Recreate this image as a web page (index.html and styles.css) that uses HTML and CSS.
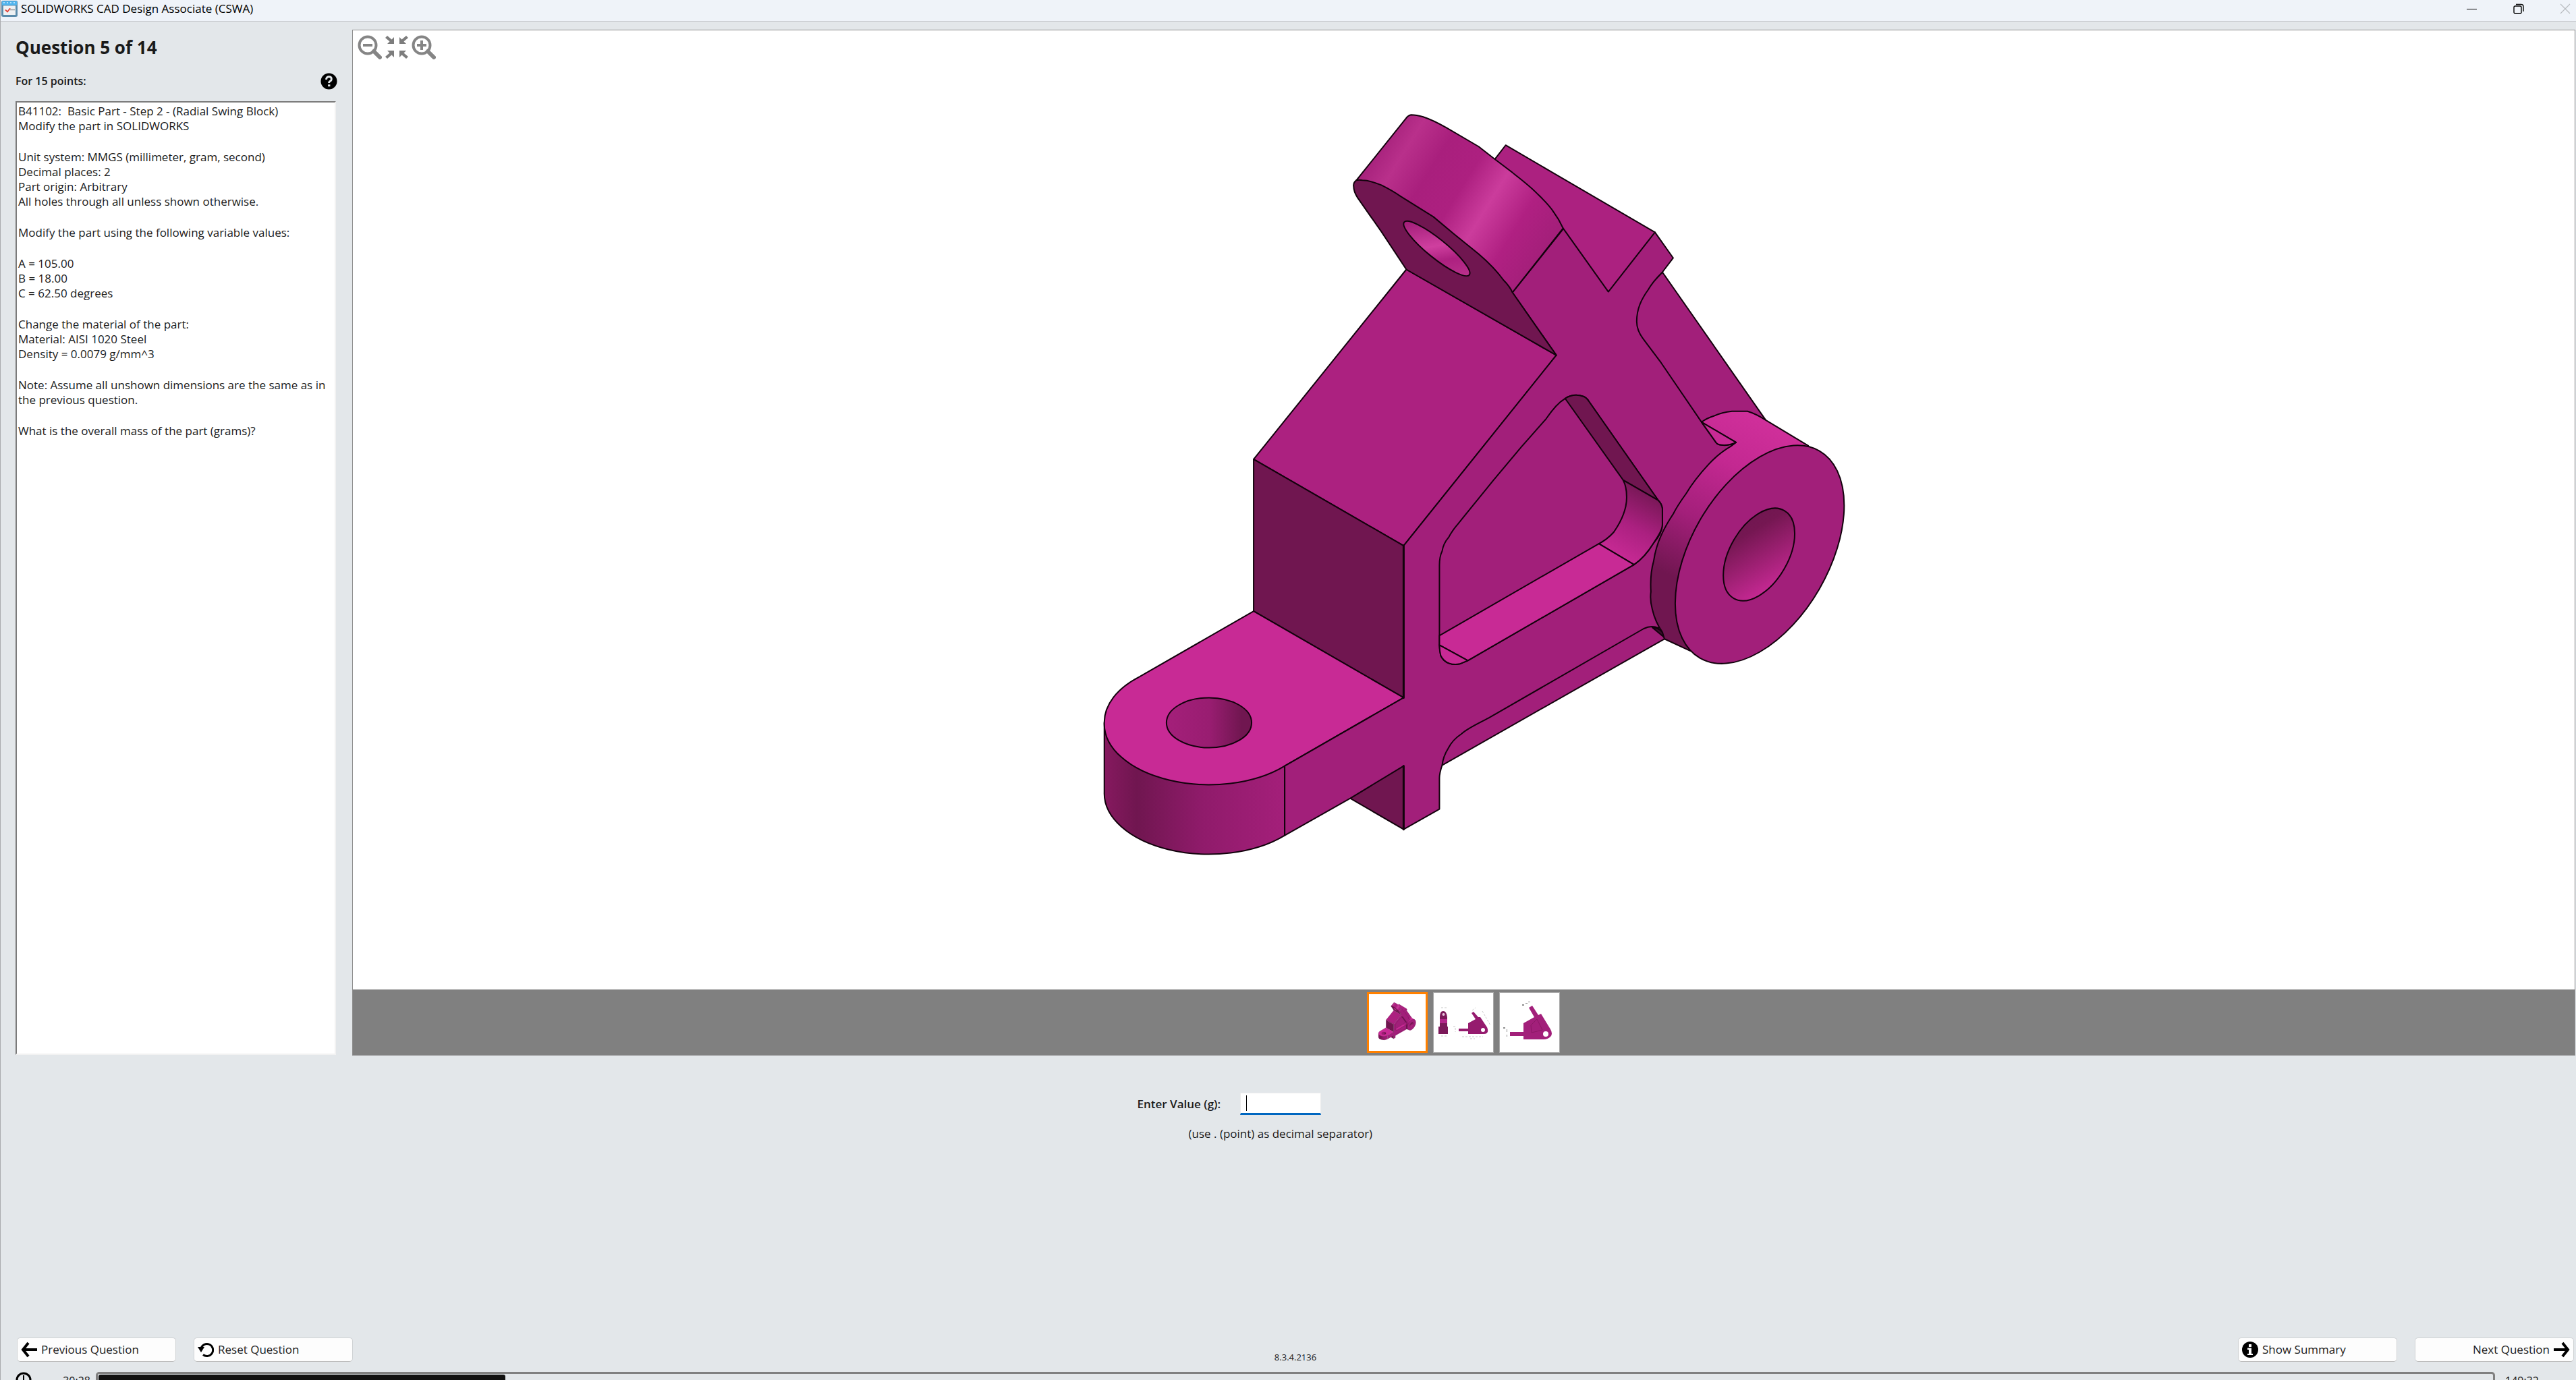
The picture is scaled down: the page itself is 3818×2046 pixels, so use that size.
FILE: index.html
```html
<!DOCTYPE html>
<html lang="en">
<head>
<meta charset="utf-8">
<title>SOLIDWORKS CAD Design Associate (CSWA)</title>
<link rel="stylesheet" href="styles.css">
</head>
<body>
<svg class="defs" width="0" height="0" aria-hidden="true">
  <defs>
    <linearGradient id="g-arm" gradientUnits="userSpaceOnUse" x1="2040" y1="215" x2="2290" y2="370">
      <stop offset="0" stop-color="#a4207a"/><stop offset=".14" stop-color="#b9308b"/><stop offset=".3" stop-color="#a91f7d"/><stop offset=".48" stop-color="#ad2080"/><stop offset=".64" stop-color="#cb3c9c"/><stop offset=".82" stop-color="#b02082"/><stop offset="1" stop-color="#a41f7a"/>
    </linearGradient>
    <linearGradient id="g-armhole" gradientUnits="userSpaceOnUse" x1="2095" y1="340" x2="2165" y2="400">
      <stop offset="0" stop-color="#a41f7a"/><stop offset=".45" stop-color="#cf3f9f"/><stop offset=".7" stop-color="#ad2080"/><stop offset="1" stop-color="#b9308b"/>
    </linearGradient>
    <linearGradient id="g-foot" gradientUnits="userSpaceOnUse" x1="1638" y1="0" x2="1905" y2="0">
      <stop offset="0" stop-color="#86195f"/><stop offset=".18" stop-color="#701650"/><stop offset=".55" stop-color="#901b6b"/><stop offset="1" stop-color="#a41f7a"/>
    </linearGradient>
    <linearGradient id="g-foothole" gradientUnits="userSpaceOnUse" x1="1730" y1="0" x2="1857" y2="0">
      <stop offset="0" stop-color="#a41f7a"/><stop offset=".5" stop-color="#991d71"/><stop offset=".88" stop-color="#701650"/><stop offset="1" stop-color="#701650"/>
    </linearGradient>
    <linearGradient id="g-fillet" gradientUnits="userSpaceOnUse" x1="2450" y1="725" x2="2395" y2="825">
      <stop offset="0" stop-color="#701650"/><stop offset=".55" stop-color="#ab2080"/><stop offset="1" stop-color="#c82a95"/>
    </linearGradient>
    <linearGradient id="g-rim" gradientUnits="userSpaceOnUse" x1="2600" y1="620" x2="2465" y2="900">
      <stop offset="0" stop-color="#cf2f9a"/><stop offset=".25" stop-color="#c32891"/><stop offset=".55" stop-color="#a31f7a"/><stop offset=".85" stop-color="#701650"/><stop offset="1" stop-color="#701650"/>
    </linearGradient>
    <linearGradient id="g-bore" gradientUnits="userSpaceOnUse" x1="2640" y1="770" x2="2575" y2="885">
      <stop offset="0" stop-color="#701650"/><stop offset=".2" stop-color="#751752"/><stop offset=".85" stop-color="#c32891"/><stop offset="1" stop-color="#c82a95"/>
    </linearGradient>
    <symbol id="part" viewBox="1600 46 1140 1420">
      <g stroke="#12020c" stroke-width="2" stroke-linejoin="round" stroke-linecap="round">
        <path fill="#a21f7a" d="M2464 404L2617 623 2567 665 2540 720 2464 900 2400 560 2400 470Z"/>
        <path fill="#a21f7a" d="M2138 1134L2467 947 2480 930 2449 890 2400 900 2130 1080Z"/>
        <path fill="#ac2180" d="M2085 400L1859 681 2081 809 2307 527Z"/>
        <path fill="#701650" d="M1859 681V906L2081 1034V809Z"/>
        <path fill="#701650" d="M2002 1183L2081 1229V1135L2040 1140Z"/>
        <path fill="url(#g-foot)" d="M1638 1071V1174A155 90 0 0 0 1905 1238V1135L1800 1060Z"/>
        <path fill="#c82a95" d="M1859 906L1690 1003A155 90 0 0 0 1638 1071A155 90 0 0 0 1905 1135L2081 1034Z"/>
        <ellipse fill="url(#g-foothole)" cx="1793" cy="1071" rx="63" ry="37"/>
        <path fill="#a21f7a" d="M2307 527L2081 809V1034L1905 1135V1238L2002 1183 2081 1135V1229L2134 1199V1153C2134 1146 2136 1140 2138 1134C2139 1125 2142 1117 2147 1109C2151 1101 2157 1094 2166 1088C2176 1079 2190 1073 2207 1064L2436 932C2444 928 2452 928 2458 931L2480 900 2565 662 2573 656 2565 659Q2558 661 2552 660Q2547 660 2544 657L2522 626 2462 538 2435 502C2429 494 2426 486 2426 477C2426 458 2433 444 2443 430C2448 421 2456 412 2464 404L2480 383 2453 345 2318 339 2242 434Z"/>
        <path fill="#3a0a2a" d="M2449 930Q2458 930 2464 937L2467 945Z"/>
        <path fill="#ac2180" d="M2215 238L2232 216 2453 345 2384 433 2317 339Z"/>
        <path fill="url(#g-arm)" d="M2092 171Q2087 172 2084 177L2011 268 2020 290 2242 434 2317 339C2313 330 2309 323 2303 315C2296 304 2287 296 2277 286C2266 275 2254 266 2240 255L2215 236 2192 218 2144 190C2132 183 2122 178 2110 174Q2100 171 2092 171Z"/>
        <path fill="#701650" d="M2011 268Q2006 272 2007 277C2007 283 2009 288 2013 294L2048 344 2085 400 2307 527 2242 434C2239 427 2235 422 2229 416C2219 402 2206 389 2192 377L2155 347 2125 322 2077 292C2067 285 2058 280 2048 275C2038 271 2029 268 2020 268Q2015 267 2011 268Z"/>
        <ellipse fill="url(#g-armhole)" cx="2130" cy="369" rx="62" ry="14" transform="rotate(39 2130 369)"/>
        <path fill="#a21f7a" d="M2320 591C2310 597 2300 609 2292 621L2255 663 2214 712 2162 776C2156 783 2151 790 2148 796C2142 803 2139 810 2138 817C2135 823 2134 831 2134 838V956C2134 962 2135 967 2136 972C2139 978 2142 981 2148 983Q2156 986 2164 984L2176 979 2422 837C2434 829 2443 818 2451 805C2459 796 2464 787 2464 777V754Q2463 747 2458 742L2355 595Q2352 590 2347 588Q2333 583 2320 591Z"/>
        <path fill="#701650" d="M2320 591L2406 712 2458 742 2355 595Q2352 590 2347 588Q2333 583 2320 591Z"/>
        <path fill="url(#g-fillet)" d="M2406 712Q2411 722 2411 735C2412 753 2403 773 2392 789Q2382 800 2370 806L2422 837C2434 829 2443 818 2451 805C2459 793 2464 785 2464 777V754Q2463 747 2458 742Z"/>
        <path fill="#c82a95" d="M2370 806L2134 942V956L2176 979 2422 837Z"/>
        <path fill="#c82a95" d="M2134 956L2176 979 2164 984Q2156 986 2148 983C2142 981 2139 978 2136 972Q2134 965 2134 956Z"/>
        <path fill="url(#g-rim)" d="M2522 626Q2530 620 2540 617C2549 613 2558 611 2567 610H2590C2600 613 2609 618 2617 623L2680 661 2700 700 2506 965 2467 947 2464 937C2457 927 2452 916 2449 903C2446 892 2446 884 2447 877C2446 860 2447 846 2451 832C2453 818 2457 805 2462 794C2467 783 2472 774 2480 762C2485 752 2491 743 2499 732C2508 717 2519 703 2532 689C2542 678 2553 669 2565 662L2573 656Z"/>
        <path fill="#c82a95" d="M2522 626L2544 657Q2547 660 2552 660 2562 661 2573 656Z"/>
        <ellipse fill="#a21f7a" cx="2608" cy="822" rx="177" ry="102" transform="rotate(-60 2608 822)"/>
        <ellipse fill="url(#g-bore)" cx="2607" cy="822" rx="75" ry="43" transform="rotate(-60 2607 822)"/>
        <path fill="none" stroke-width="3" d="M2081 809V1034M2081 1135V1229"/>
      </g>
    </symbol>
  </defs>
</svg>

<div class="app">
  <header class="titlebar">
    <svg class="app-icon" viewBox="0 0 24 32" preserveAspectRatio="none" aria-hidden="true">
      <rect x="0" y="0" width="24" height="32" rx="3" fill="#5b8bab"/>
      <path d="M1 1h22v8H1z" fill="#4fb4ee"/><path d="M3 4h2M8 4h2M13 4h2M18 4h2" stroke="#d8efff" stroke-width="2"/>
      <rect x="3" y="10" width="18" height="18" fill="#eef1f3"/>
      <path d="M6 18l3 4 4-7" fill="none" stroke="#e23b30" stroke-width="2"/><path d="M13 18h7" stroke="#9a9a9a" stroke-width="2"/>
    </svg>
    <h1 class="title">SOLIDWORKS CAD Design Associate (CSWA)</h1>
    <div class="window-controls">
      <button class="win-btn" aria-label="Minimize"><svg viewBox="0 0 16 16"><path d="M0 8.500h15" stroke="#000"/></svg></button>
      <button class="win-btn" aria-label="Restore"><svg viewBox="0 0 16 16" fill="none" stroke="#000" stroke-width="1.400"><rect x="1" y="4" width="11" height="11" rx="2"/><path d="M4 1.500h7.500q3.500 0 3.500 3.500v7"/></svg></button>
      <button class="win-btn" aria-label="Close" disabled><svg viewBox="0 0 16 16"><path d="M1 1l14 14M15 1L1 15" stroke="#b9bcc1" stroke-width="1.200"/></svg></button>
    </div>
  </header>

  <main class="workspace">
    <aside class="sidebar">
      <h2 class="question-number">Question 5 of 14</h2>
      <div class="points-row">
        <span class="points">For 15 points:</span>
        <button class="help" aria-label="Help"><svg viewBox="0 0 26 26"><circle cx="13" cy="13" r="12.500" fill="#000"/><path d="M9 10.500V9q1-3 4-3 4 0 4 3.500 0 2-2 3.200-2 1.200-2 3" fill="none" stroke="#e3e7ea" stroke-width="3"/><path d="M11.500 18h3.500v3h-3.500z" fill="#e3e7ea"/></svg></button>
      </div>
      <article class="prompt">
        <p>B41102:&nbsp; Basic Part - Step 2 - (Radial Swing Block)<br>Modify the part in SOLIDWORKS</p>
        <p>Unit system: MMGS (millimeter, gram, second)<br>Decimal places: 2<br>Part origin: Arbitrary<br>All holes through all unless shown otherwise.</p>
        <p>Modify the part using the following variable values:</p>
        <p>A = 105.00<br>B = 18.00<br>C = 62.50 degrees</p>
        <p>Change the material of the part:<br>Material: AISI 1020 Steel<br>Density = 0.0079 g/mm^3</p>
        <p>Note: Assume all unshown dimensions are the same as in<br>the previous question.</p>
        <p>What is the overall mass of the part (grams)?</p>
      </article>
    </aside>

    <section class="viewer" aria-label="Part view">
      <div class="canvas">
        <svg class="drawing" role="img" aria-label="Radial Swing Block"><use href="#part"/></svg>
        <div class="zoom-tools">
          <button class="tool" aria-label="Zoom out"><svg viewBox="0 0 36 36" fill="none" stroke="#858585"><circle cx="15" cy="15" r="12.500" stroke-width="4"/><path d="M24 24l9 9" stroke-width="6" stroke-linecap="round"/><path d="M8 15h14" stroke-width="4"/></svg></button>
          <button class="tool" aria-label="Fit"><svg viewBox="0 0 36 36" fill="#7d7d7d"><path d="M14 3v10H4l3.500-3.500L1 4l3-3 6.500 5.500zM22 3v10h10l-3.500-3.500L35 4l-3-3-6.500 5.500zM14 33V23H4l3.500 3.500L1 32l3 3 6.500-5.500zM22 33V23h10l-3.500 3.500L35 32l-3 3-6.500-5.500z"/></svg></button>
          <button class="tool" aria-label="Zoom in"><svg viewBox="0 0 36 36" fill="none" stroke="#858585"><circle cx="15" cy="15" r="12.500" stroke-width="4"/><path d="M24 24l9 9" stroke-width="6" stroke-linecap="round"/><path d="M8 15h14M15 8v14" stroke-width="4"/></svg></button>
        </div>
      </div>
      <div class="thumbs">
        <button class="thumb thumb-active" aria-label="View 1"><svg viewBox="0 0 84 84"><use href="#part" x="12" y="6" width="58" height="72"/></svg></button>
        <button class="thumb" aria-label="View 2"><svg viewBox="0 0 88 88">
          <path d="M9 36q0-9 5-9t6 9v14h1v11H7V50h2z" fill="#7b1859"/><path d="M9 39h11v6H9z" fill="#b3268a"/><circle cx="14.500" cy="32" r="2" fill="#e7c4dc"/>
          <path d="M37 53h14V45l11-6-6-9 3-2 7 8h3l10 15q4 10-5 10H51v-4H37z" fill="#951b6e"/><circle cx="73" cy="55" r="3" fill="#fff"/>
          <g stroke="#c9c9c9" fill="none" stroke-dasharray="3 2"><path d="M11 22h8M11 64h8M29 50h5M32 52v6M42 65h31M57 26l5-4M72 27l12 21M54 68h7"/></g>
        </svg></button>
        <button class="thumb" aria-label="View 3"><svg viewBox="0 0 88 88">
          <path d="M15 58h20V45l16-9-8-14 5-3 9 14 4-2 14 23q4 7 0 11t-10 4H35v-5H15z" fill="#a21f7a"/><path d="M46 48l9-9 8 16-16 4z" fill="none" stroke="#8a1965"/><circle cx="68" cy="61" r="4" fill="#fff"/>
          <g fill="#8f8f8f"><path d="M33 17h3v2h-3zM38 15h3v1h-3zM42 13h3v1h-3zM5 51h3v2H5zM10 54h1v4h-1zM10 62h1v3h-1z"/></g>
        </svg></button>
      </div>
    </section>
  </main>

  <form class="answer">
    <div class="answer-row">
      <label class="answer-label" for="value">Enter Value (g):</label>
      <span class="field"><input id="value" class="value" type="text" autocomplete="off"><i class="caret"></i></span>
    </div>
    <p class="hint">(use . (point) as decimal separator)</p>
  </form>

  <nav class="actions">
    <div class="action-group">
      <button class="action"><svg viewBox="0 0 24 24" fill="none" stroke="#000" stroke-width="4"><path d="M3 12h21M11 2L3 12l8 10"/></svg>Previous Question</button>
      <button class="action"><svg viewBox="0 0 24 24" fill="none" stroke="#000" stroke-width="3"><path d="M5 10a9 9 0 1 1 3 9.500"/><path d="M0 8h10l-5 8z" fill="#000" stroke="none"/></svg>Reset Question</button>
    </div>
    <span class="version">8.3.4.2136</span>
    <div class="action-group action-group-end">
      <button class="action"><svg viewBox="0 0 24 24"><circle cx="12" cy="12" r="12" fill="#000"/><path d="M10 4h4v4h-4zM8 9.500h6V18h2v2H8v-2h2v-6H8z" fill="#fff"/></svg>Show Summary</button>
      <button class="action action-next">Next Question<svg viewBox="0 0 24 24" fill="none" stroke="#000" stroke-width="4"><path d="M0 12h21M13 2l8 10-8 10"/></svg></button>
    </div>
  </nav>

  <footer class="timer">
    <svg class="clock" viewBox="0 0 24 24" fill="none" stroke="#000" stroke-width="3"><circle cx="12" cy="12" r="10"/><path d="M12 5v8h5" stroke-width="2"/></svg>
    <span class="time elapsed">30:28</span>
    <div class="track" role="progressbar" aria-label="Time used" aria-valuemin="0" aria-valuemax="180" aria-valuenow="30"><div class="fill" style="width: 17%"></div></div>
    <span class="time remaining">149:32</span>
  </footer>
</div>
</body>
</html>
```
FILE: styles.css
```css
* { box-sizing: border-box; margin: 0; padding: 0; }

html, body { height: 100%; overflow: hidden; }

body {
  font-family: "Open Sans", "Noto Sans", sans-serif;
  font-size: 17px;
  line-height: 22px;
  color: #1a1a1a;
  background: #e3e7ea;
}

button { font: inherit; color: inherit; border: 0; background: none; display: flex; align-items: center; }
.defs { position: absolute; }

/* The timer row runs slightly below the window edge */
.app {
  display: flex;
  flex-direction: column;
  height: calc(100vh + 16px);
  border-left: 1px solid #a9abad;
}

.titlebar {
  display: flex;
  align-items: center;
  height: 32px;
  padding: 0 8px 5px 1px;
  background: #eff3f9;
  border-bottom: 1px solid #c3c6ca;
}
.app-icon { width: 24px; height: 24px; }
.title { margin-left: 5px; font-size: 17px; font-weight: 400; color: #000; }
.window-controls { display: flex; gap: 53px; margin-left: auto; }
.win-btn svg { display: block; width: 16px; height: 16px; }

.workspace { display: flex; flex: 1; min-height: 0; }

.sidebar {
  display: flex;
  flex-direction: column;
  flex: 0 0 521px;
  padding: 22px 24px 1px 22px;
}
.question-number { font-size: 26px; line-height: 32px; font-weight: 700; }
.points-row {
  display: flex;
  align-items: center;
  justify-content: space-between;
  height: 26px;
  margin: 21px 0 17px;
}
.points { font-size: 16px; font-weight: 600; }
.help { margin-right: -2px; }
.help svg { display: block; width: 25px; height: 25px; }

.prompt {
  flex: 1;
  display: flex;
  flex-direction: column;
  gap: 24px;
  padding: 2px;
  background: #fff;
  border: 2px solid;
  border-color: #7b7b7b #f2f2f2 #f2f2f2 #7b7b7b;
  white-space: nowrap;
}

.viewer {
  flex: 1;
  display: flex;
  flex-direction: column;
  min-width: 0;
  margin-top: 12px;
  margin-right: 1px;
  border: 1px solid #8d8d8d;
  background: #fff;
}
.canvas { position: relative; flex: 1; min-height: 0; }
.drawing { display: block; width: 100%; height: 100%; }
.zoom-tools { position: absolute; top: 7px; left: 7px; display: flex; gap: 4px; }
.tool svg { display: block; width: 36px; height: 36px; }

.thumbs {
  display: flex;
  justify-content: center;
  gap: 8px;
  padding: 4px 2px 3px 0;
  background: #808080;
}
.thumb { width: 90px; height: 90px; background: #fff; border: 1px solid #a8a8a8; }
.thumb svg { display: block; width: 100%; height: 100%; }
.thumb-active { border: 3px solid #ff8000; }

.answer { height: 418px; padding: 55px 0 0 calc(50% - 224px); }
.answer-row { display: flex; align-items: center; }
.answer-label { width: 152px; font-weight: 600; }
.field { position: relative; }
.value {
  display: block;
  width: 120px;
  height: 33px;
  padding: 0 8px;
  font: inherit;
  background: #fff;
  border: 1px solid #ececec;
  border-bottom: 3px solid #0067c0;
  outline: none;
}
.caret { position: absolute; left: 9px; top: 4px; width: 1px; height: 23px; background: #000; }
.hint { margin-top: 17px; padding-left: 76px; }

.actions {
  display: grid;
  grid-template-columns: 1fr auto 1fr;
  align-items: start;
  padding: 0 3px 11px 24px;
}
.action-group { display: flex; gap: 26px; }
.action-group-end { justify-content: flex-end; }
.action {
  gap: 6px;
  width: 236px;
  height: 36px;
  padding: 0 5px;
  background: #fdfdfd;
  border: 1px solid #cfd2d4;
  border-bottom-color: #bbb;
  border-radius: 5px;
}
.action svg { width: 24px; height: 24px; }
.action-next { justify-content: flex-end; }
.version { margin-top: 18px; font-size: 13px; }

.timer { display: flex; align-items: flex-start; padding: 0 56px 0 22px; height: 28px; }
.clock { width: 24px; height: 24px; }
.time { padding-top: 2px; font-size: 16px; }
.elapsed { width: 95px; padding-right: 8px; text-align: right; }
.track {
  flex: 1;
  height: 28px;
  padding: 1px 0 0 1px;
  border: 3px solid #808080;
  border-radius: 5px;
}
.fill { height: 20px; background: #111; border-radius: 3px; }
.remaining { width: 64px; padding-left: 15px; }
```
